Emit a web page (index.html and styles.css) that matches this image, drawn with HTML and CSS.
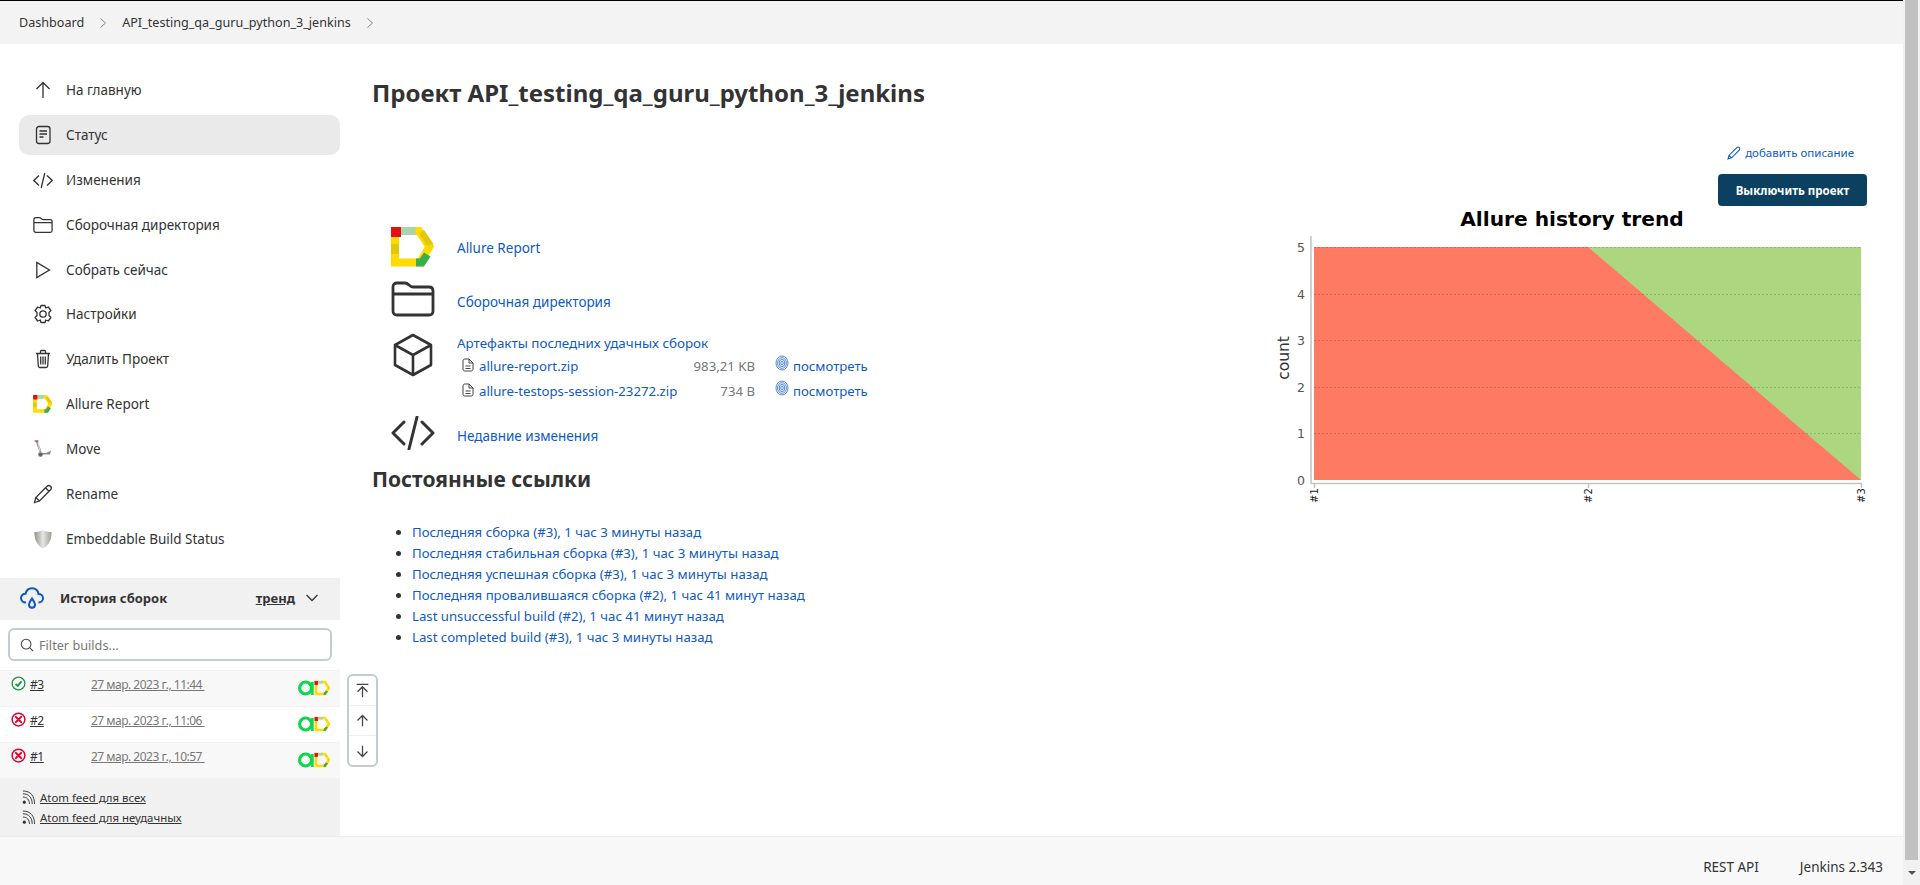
FILE: index.html
```html
<!DOCTYPE html>
<html>
<head>
    <meta charset="utf-8">
    <title>API_testing_qa_guru_python_3_jenkins</title>
    <link rel="stylesheet" href="styles.css">
</head>
<body>
    <svg class="sprite">
        <symbol id="allure" viewBox="0 0 44 40">
            <path d="M4 4H28L38.500 19.500L29 35.500H4Z" fill="none" stroke="#ffdb00" stroke-width="8"/>
            <rect x="0" y="17" width="8" height="10" fill="#e3c708"/>
            <rect x="0" y="0" width="10" height="10" fill="#e60d14"/>
            <rect x="10" y="0" width="14.500" height="8" fill="#a8d6a8"/>
            <path d="M28 7L33 3L42.500 17L36 19Z" fill="#e3c708"/>
            <path d="M25 31.500H29L33 25.500L39.500 29.500L33 39.500H25Z" fill="#3aae4a"/>
        </symbol>
        <symbol id="badge" viewBox="0 0 32 16">
            <circle cx="7.600" cy="8" r="6" fill="none" stroke="#10d64f" stroke-width="3.200"/>
            <path d="M14.400 2V15" stroke="#10d64f" stroke-width="2.600"/>
            <path d="M18 2H27L31 8L27 14H18Z" fill="none" stroke="#ffdb00" stroke-width="2.600"/>
            <rect x="16.500" y="1" width="3.400" height="4" fill="#e60d14"/>
            <rect x="20" y="1" width="5" height="2.600" fill="#a8d6a8"/>
            <path d="M25.500 15L26 12.500L28 10.500L30 11.500L27.500 15Z" fill="#3aae4a"/>
        </symbol>
        <symbol id="folder" viewBox="0 0 44 36">
            <path d="M6 2H14C16 2 17 3 18 4C19 5 20 6 22 6H38C40.500 6 42 7.500 42 10V30C42 32.500 40.500 34 38 34H6C3.500 34 2 32.500 2 30V6C2 3.500 3.500 2 6 2Z M2 13H42" fill="none" stroke="currentColor" stroke-width="2.800" stroke-linejoin="round"/>
        </symbol>
        <symbol id="code" viewBox="0 0 44 34">
            <path d="M13 6L2 17L13 28M31 6L42 17L31 28M26 1L18 33" fill="none" stroke="currentColor" stroke-width="3" stroke-linecap="round" stroke-linejoin="round"/>
        </symbol>
        <symbol id="print" viewBox="0 0 14 16">
            <g fill="none" stroke="#3f78c9" stroke-width=".9">
                <ellipse cx="7" cy="8" rx="6" ry="7"/>
                <ellipse cx="7" cy="8" rx="4.400" ry="5.300"/>
                <ellipse cx="7" cy="8" rx="2.800" ry="3.600"/>
                <ellipse cx="7" cy="8" rx="1.200" ry="1.900"/>
            </g>
        </symbol>
        <symbol id="file" viewBox="0 0 12 14">
            <path d="M3 1H7L11 5V11C11 12.300 10.300 13 9 13H3C1.700 13 1 12.300 1 11V3C1 1.700 1.700 1 3 1ZM7 1V5H11M3.500 8H8.500M3.500 10.500H8.500" fill="none" stroke="#444" stroke-width="1"/>
        </symbol>
        <symbol id="bad" viewBox="0 0 16 16">
            <circle cx="8" cy="8" r="6.800" fill="none" stroke="#e0002b" stroke-width="1.600"/>
            <path d="M5.200 5.200L10.800 10.800M10.800 5.200L5.200 10.800" stroke="#e0002b" stroke-width="2.200" stroke-linecap="round"/>
        </symbol>
        <symbol id="rss" viewBox="0 0 14 16">
            <circle cx="2.500" cy="13" r="1.700" fill="#333"/>
            <path d="M1 7.500C5.500 7.500 8 10.500 8 15M1 4C7.500 4 11 8.500 11 15M1 1C9.500 1 13.500 6.500 13.500 15" fill="none" stroke="#333" stroke-width="1"/>
        </symbol>
    </svg>

    <div class="window">
        <div class="page">
            <div class="breadcrumbs">
                <a href="#">Dashboard</a>
                <svg class="crumb-arrow" viewBox="0 0 8 12"><path d="M1.500 1.500L6.500 6L1.500 10.500"/></svg>
                <a href="#">API_testing_qa_guru_python_3_jenkins</a>
                <svg class="crumb-arrow" viewBox="0 0 8 12"><path d="M1.500 1.500L6.500 6L1.500 10.500"/></svg>
            </div>

            <div class="main">
                <div class="sidebar">
                    <div class="tasks">
                        <a class="task" href="#">
                            <svg class="task-icon" viewBox="0 0 20 20"><path d="M10 18V2.500M3.500 9L10 2.500L16.500 9"/></svg>
                            <span>На главную</span>
                        </a>
                        <a class="task task-active" href="#">
                            <svg class="task-icon" viewBox="0 0 20 20"><rect x="3.500" y="1.500" width="13.500" height="17" rx="2.500"/><path d="M6.500 6H14M6.500 9H14M6.500 12H10.500"/></svg>
                            <span>Статус</span>
                        </a>
                        <a class="task" href="#">
                            <svg class="task-icon" viewBox="0 0 20 20"><path d="M6 5.500L0.800 10.500L6 15.500M14 5.500L19.200 10.500L14 15.500M11.800 3L8.200 18"/></svg>
                            <span>Изменения</span>
                        </a>
                        <a class="task" href="#">
                            <svg class="task-icon" viewBox="0 0 20 20"><use href="#folder"/></svg>
                            <span>Сборочная директория</span>
                        </a>
                        <a class="task" href="#">
                            <svg class="task-icon" viewBox="0 0 20 20"><path d="M3.800 2.500V17.500L16.500 10Z"/></svg>
                            <span>Собрать сейчас</span>
                        </a>
                        <a class="task" href="#">
                            <svg class="task-icon" viewBox="0 0 20 20"><circle cx="10" cy="10" r="3.200"/><path d="M8 1.500H12L12.700 4L15.300 3L17.900 6.500L16 8.500V11.500L17.900 13.500L15.300 17L12.700 16L12 18.500H8L7.300 16L4.700 17L2.100 13.500L4 11.500V8.500L2.100 6.500L4.700 3L7.300 4Z" stroke-linejoin="round"/></svg>
                            <span>Настройки</span>
                        </a>
                        <a class="task" href="#">
                            <svg class="task-icon" viewBox="0 0 20 20"><path d="M3 4.500H17M7.500 4.500V2.500C7.500 1.800 8 1.500 8.500 1.500H11.500C12 1.500 12.500 1.800 12.500 2.500V4.500M4.500 4.500L5.300 17C5.400 18 6 18.500 6.800 18.500H13.200C14 18.500 14.600 18 14.700 17L15.500 4.500M7.700 7.500V15.500M10 7.500V15.500M12.300 7.500V15.500"/></svg>
                            <span>Удалить Проект</span>
                        </a>
                        <a class="task" href="#">
                            <svg class="task-logo" viewBox="0 0 20 18"><use href="#allure" width="20" height="18"/></svg>
                            <span>Allure Report</span>
                        </a>
                        <a class="task" href="#">
                            <svg class="task-logo" viewBox="0 0 20 20">
                                <path d="M3.500 1.500L7.500 13" stroke="#9a9a9a" stroke-width="2.200" fill="none"/>
                                <path d="M5 4L7 12" stroke="white" stroke-width=".7" fill="none"/>
                                <path d="M1.500 2H5.500" stroke="#c0474a" stroke-width="1.200"/>
                                <path d="M7 14H13L18 11.500L17 15.500H9Z" fill="#8c8c85"/>
                                <circle cx="7.500" cy="15.500" r="2.300" fill="#666"/>
                            </svg>
                            <span>Move</span>
                        </a>
                        <a class="task" href="#">
                            <svg class="task-icon" viewBox="0 0 20 20"><path d="M1.500 18.500L2.800 13.500L14 2.300C15 1.300 16.500 1.300 17.500 2.300C18.500 3.300 18.500 4.800 17.500 5.800L6.500 17ZM12.500 3.800L16 7.300M2.800 13.500L6.500 17"/></svg>
                            <span>Rename</span>
                        </a>
                        <a class="task" href="#">
                            <svg class="task-logo" viewBox="0 0 20 22">
                                <defs>
                                    <linearGradient id="shield" x1="0" y1="0" x2="1" y2="0">
                                        <stop offset="0" stop-color="#8f9389"/>
                                        <stop offset=".5" stop-color="#e6e6e2"/>
                                        <stop offset="1" stop-color="#9a9d94"/>
                                    </linearGradient>
                                </defs>
                                <path d="M10 1C13 2.500 16 3.200 19.500 3.200C19.500 11 17 17.500 10 21.500C3 17.500 .5 11 .5 3.200C4 3.200 7 2.500 10 1Z" fill="url(#shield)"/>
                            </svg>
                            <span>Embeddable Build Status</span>
                        </a>
                    </div>

                    <div class="history">
                        <div class="history-head">
                            <svg class="cloud" viewBox="0 0 24 22"><path d="M6 15.500C3 15.500 1 13.500 1 11C1 8.500 3 6.700 5.500 6.800C6.300 3.500 8.800 1.300 12 1.300C15.500 1.300 18 3.800 18.500 7C21 7 23 8.800 23 11.200C23 13.700 21 15.500 18.500 15.500M12 11.500C10.500 14 9 15.500 9 17.500C9 19.500 10.500 20.700 12 20.700C13.500 20.700 15 19.500 15 17.500C15 15.500 13.500 14 12 11.500Z"/></svg>
                            <span class="history-title">История сборок</span>
                            <a class="trend" href="#">тренд</a>
                            <svg class="chevron" viewBox="0 0 14 8"><path d="M1.500 1L7 6.500L12.500 1"/></svg>
                        </div>
                        <div class="filter-wrap">
                            <div class="filter">
                                <svg class="search" viewBox="0 0 16 16"><circle cx="7" cy="7" r="5.500"/><path d="M11 11L15 15"/></svg>
                                <span>Filter builds...</span>
                            </div>
                        </div>
                        <div class="build build-odd">
                            <svg class="status" viewBox="0 0 16 16">
                                <circle cx="8" cy="8" r="6.800" fill="none" stroke="#1a9447" stroke-width="1.400"/>
                                <path d="M4.800 8.300L7.200 10.600L11.200 5.800" fill="none" stroke="#1a9447" stroke-width="1.900"/>
                            </svg>
                            <a class="build-num" href="#">#3</a>
                            <a class="build-date" href="#">27 мар. 2023 г., 11:44&nbsp;</a>
                            <svg class="badge"><use href="#badge"/></svg>
                        </div>
                        <div class="build">
                            <svg class="status"><use href="#bad"/></svg>
                            <a class="build-num" href="#">#2</a>
                            <a class="build-date" href="#">27 мар. 2023 г., 11:06&nbsp;</a>
                            <svg class="badge"><use href="#badge"/></svg>
                        </div>
                        <div class="build build-odd">
                            <svg class="status"><use href="#bad"/></svg>
                            <a class="build-num" href="#">#1</a>
                            <a class="build-date" href="#">27 мар. 2023 г., 10:57&nbsp;</a>
                            <svg class="badge"><use href="#badge"/></svg>
                        </div>
                        <div class="feeds">
                            <div class="feed"><svg class="rss"><use href="#rss"/></svg><a href="#">Atom feed для всех</a></div>
                            <div class="feed"><svg class="rss"><use href="#rss"/></svg><a href="#">Atom feed для неудачных</a></div>
                        </div>
                    </div>
                </div>

                <div class="content">
                    <h1>Проект API_testing_qa_guru_python_3_jenkins</h1>

                    <div class="actions">
                        <a class="add-desc" href="#">
                            <svg class="pencil" viewBox="0 0 20 20"><path d="M1.500 18.500L2.800 13.500L14 2.300C15 1.300 16.500 1.300 17.500 2.300C18.500 3.300 18.500 4.800 17.500 5.800L6.500 17ZM2.800 13.500L6.500 17"/></svg>
                            добавить описание
                        </a>
                        <button class="disable-btn" type="button">Выключить проект</button>
                    </div>

                    <div class="columns">
                        <div class="left">
                            <div class="link-row row-allure">
                                <svg class="big-icon"><use href="#allure" width="44" height="40"/></svg>
                                <a href="#">Allure Report</a>
                            </div>
                            <div class="link-row row-folder">
                                <svg class="big-icon"><use href="#folder" width="44" height="36"/></svg>
                                <a href="#">Сборочная директория</a>
                            </div>
                            <div class="link-row row-artifacts">
                                <svg class="big-icon cube" viewBox="0 0 44 44"><path d="M22 2L40 12V32L22 42L4 32V12ZM4 12L22 22L40 12M22 22V42"/></svg>
                                <div class="artifacts">
                                    <a class="artifacts-title" href="#">Артефакты последних удачных сборок</a>
                                    <div class="artifact">
                                        <svg class="file"><use href="#file"/></svg>
                                        <a class="artifact-name" href="#">allure-report.zip</a>
                                        <span class="artifact-size">983,21 KB</span>
                                        <svg class="print"><use href="#print"/></svg>
                                        <a href="#">посмотреть</a>
                                    </div>
                                    <div class="artifact">
                                        <svg class="file"><use href="#file"/></svg>
                                        <a class="artifact-name" href="#">allure-testops-session-23272.zip</a>
                                        <span class="artifact-size">734 B</span>
                                        <svg class="print"><use href="#print"/></svg>
                                        <a href="#">посмотреть</a>
                                    </div>
                                </div>
                            </div>
                            <div class="link-row row-code">
                                <svg class="big-icon"><use href="#code" width="44" height="34"/></svg>
                                <a href="#">Недавние изменения</a>
                            </div>

                            <h2>Постоянные ссылки</h2>
                            <ul class="permalinks">
                                <li><a href="#">Последняя сборка (#3), 1 час 3 минуты назад</a></li>
                                <li><a href="#">Последняя стабильная сборка (#3), 1 час 3 минуты назад</a></li>
                                <li><a href="#">Последняя успешная сборка (#3), 1 час 3 минуты назад</a></li>
                                <li><a href="#">Последняя провалившаяся сборка (#2), 1 час 41 минут назад</a></li>
                                <li><a href="#">Last unsuccessful build (#2), 1 час 41 минут назад</a></li>
                                <li><a href="#">Last completed build (#3), 1 час 3 минуты назад</a></li>
                            </ul>
                        </div>

                        <svg class="chart" viewBox="0 0 620 300">
                            <text class="chart-title" x="325" y="20">Allure history trend</text>
                            <rect x="67" y="41" width="547" height="233" fill="#ff7a63"/>
                            <path d="M341 41H614V274Z" fill="#add681"/>
                            <g class="chart-grid">
                                <path d="M67 41.500H614M67 88.500H614M67 134.500H614M67 181.500H614M67 227.500H614"/>
                            </g>
                            <path class="chart-axis" d="M64 30V278M64 277.500H615M67.500 278V282M341.500 278V282M614.500 278V282"/>
                            <text class="chart-num" x="58" y="46">5</text>
                            <text class="chart-num" x="58" y="93">4</text>
                            <text class="chart-num" x="58" y="139">3</text>
                            <text class="chart-num" x="58" y="186">2</text>
                            <text class="chart-num" x="58" y="232">1</text>
                            <text class="chart-num" x="58" y="279">0</text>
                            <text class="chart-label" transform="translate(42 152) rotate(-90)">count</text>
                            <text class="chart-tick" transform="translate(71 297) rotate(-90)">#1</text>
                            <text class="chart-tick" transform="translate(345 297) rotate(-90)">#2</text>
                            <text class="chart-tick" transform="translate(618 297) rotate(-90)">#3</text>
                        </svg>
                    </div>

                    <div class="jump">
                        <div class="jump-btn">
                            <svg viewBox="0 0 18 18"><path d="M2 1.500H16M9 17V5M3 10.500L9 4.500L15 10.500"/></svg>
                        </div>
                        <div class="jump-btn">
                            <svg viewBox="0 0 18 18"><path d="M9 16V3M3 9L9 3L15 9"/></svg>
                        </div>
                        <div class="jump-btn">
                            <svg viewBox="0 0 18 18"><path d="M9 2V15M3 9L9 15L15 9"/></svg>
                        </div>
                    </div>
                </div>
            </div>

            <div class="footer">
                <a href="#">REST API</a>
                <a href="#">Jenkins 2.343</a>
            </div>
        </div>

        <div class="scrollbar">
            <div class="scroll-thumb"></div>
            <div class="scroll-arrow"></div>
        </div>
    </div>
</body>
</html>
```

FILE: styles.css
```css
* {
    box-sizing: border-box;
}

html, body {
    height: 100%;
    margin: 0;
    overflow: hidden;
}

body {
    font-family: "Noto Sans", "Open Sans", "Liberation Sans", sans-serif;
    font-size: 13.5px;
    color: #333;
    background-color: white;
}

a {
    color: inherit;
    text-decoration: none;
}

.sprite {
    display: none;
}

.window {
    display: flex;
    height: 885px;
}

.page {
    flex: 1;
    display: flex;
    flex-direction: column;
    min-width: 0;
    border-top: 1px solid black;
}

/* top bar */
.breadcrumbs {
    height: 43px;
    flex: none;
    display: flex;
    align-items: center;
    padding-left: 19px;
    background-color: #f3f3f3;
    font-size: 12.600px;
}

.crumb-arrow {
    width: 8px;
    height: 12px;
    margin: 0 15px;
    fill: none;
    stroke: #888;
    stroke-width: 1;
}

.main {
    flex: 1;
    display: flex;
    min-height: 0;
}

/* left side */
.sidebar {
    width: 340px;
    flex: none;
    display: flex;
    flex-direction: column;
}

.tasks {
    flex: 1;
    padding: 26px 0 0 19px;
    display: flex;
    flex-direction: column;
    gap: 4.900px;
}

.task {
    width: 321px;
    height: 40px;
    flex: none;
    display: flex;
    align-items: center;
    gap: 13px;
    padding-left: 14px;
    border-radius: 10px;
}

.task-active {
    background-color: #eaeaea;
}

.task-icon {
    width: 20px;
    height: 20px;
    flex: none;
    fill: none;
    stroke: #333;
    stroke-width: 1.300;
    color: #333;
}

.task-logo {
    width: 20px;
    height: 20px;
    flex: none;
}

.history {
    flex: none;
    height: 258px;
    display: flex;
    flex-direction: column;
}

.history-head {
    height: 42px;
    flex: none;
    display: flex;
    align-items: center;
    padding: 0 21px 2px 20px;
    background-color: #f1f1f1;
    font-size: 13px;
    font-weight: 700;
}

.cloud {
    width: 24px;
    height: 22px;
    fill: none;
    stroke: #0b55c4;
    stroke-width: 2;
    margin-right: 16px;
}

.history-title {
    flex: 1;
}

.trend {
    text-decoration: underline;
    margin-right: 10px;
}

.chevron {
    width: 14px;
    height: 8px;
    fill: none;
    stroke: #333;
    stroke-width: 1.300;
}

.filter-wrap {
    height: 50px;
    flex: none;
    padding: 8px 8px 0 8px;
}

.filter {
    height: 33px;
    display: flex;
    align-items: center;
    gap: 5px;
    padding-left: 10px;
    border: 2px solid #c3ccd1;
    border-radius: 6px;
    color: #777;
    font-size: 12.700px;
}

.search {
    width: 14px;
    height: 14px;
    fill: none;
    stroke: #444;
    stroke-width: 1.200;
}

.build {
    height: 36px;
    flex: none;
    display: flex;
    align-items: flex-start;
    padding: 5px 10px 0 11px;
    border-top: 1px solid #f1f1f1;
    color: #777;
}

.build-odd {
    background-color: #f8f8f8;
}

.status {
    width: 15px;
    height: 15px;
    flex: none;
    margin-right: 4px;
}

.build-num {
    width: 61px;
    color: #333;
    text-decoration: underline;
    font-size: 12px;
    letter-spacing: -0.4px;
}

.build-date {
    text-decoration: underline;
    font-size: 12px;
    letter-spacing: -0.5px;
    flex: 1;
}

.badge {
    width: 32px;
    height: 16px;
    flex: none;
    margin-top: 4px;
}

.feeds {
    flex: 1;
    padding: 9px 0 0 22px;
    background-color: #f1f1f1;
    font-size: 11.400px;
}

.feed {
    height: 20px;
    display: flex;
    align-items: center;
    gap: 5px;
}

.feed a {
    text-decoration: underline;
}

.rss {
    width: 13px;
    height: 15px;
    flex: none;
}

/* right side */
.content {
    flex: 1;
    min-width: 0;
    position: relative;
    padding: 0 36px 0 32px;
}

h1 {
    margin: 0;
    padding-top: 32px;
    font-size: 24px;
    line-height: 34px;
    font-weight: 700;
}

.actions {
    display: flex;
    flex-direction: column;
    align-items: flex-end;
    margin-top: 34px;
}

.add-desc {
    display: flex;
    align-items: center;
    gap: 4px;
    font-size: 11.500px;
    line-height: 18px;
    color: #0f5ac6;
    margin-right: 13px;
}

.pencil {
    width: 14px;
    height: 14px;
    fill: none;
    stroke: #0f5ac6;
    stroke-width: 1.500;
}

.disable-btn {
    width: 149px;
    height: 32px;
    margin-top: 12px;
    border: none;
    border-radius: 4px;
    background-color: #0b4060;
    color: white;
    font-family: inherit;
    font-size: 11.500px;
    font-weight: 700;
}

.columns {
    display: flex;
    justify-content: space-between;
    align-items: flex-start;
}

.left {
    color: #0f5ac6;
    padding: 21px 0 0 19px;
}

.link-row {
    display: flex;
    align-items: center;
    gap: 22px;
}

.big-icon {
    width: 44px;
    height: 40px;
    flex: none;
    color: #333;
}

.row-allure a {
    margin-top: 2px;
}

.row-folder {
    margin-top: 14px;
}

.row-folder .big-icon {
    height: 36px;
}

.row-folder a, .row-code a {
    margin-top: 6px;
}

.row-artifacts {
    margin-top: 16px;
    align-items: flex-start;
}

.cube {
    height: 44px;
    fill: none;
    stroke: #333;
    stroke-width: 2.600;
    stroke-linejoin: round;
}

.artifacts {
    font-size: 13.200px;
}

.artifacts-title {
    display: block;
    font-size: 13.400px;
    line-height: 20px;
}

.artifact {
    display: flex;
    align-items: center;
    height: 25px;
    padding-left: 5px;
    white-space: nowrap;
}

.file {
    width: 12px;
    height: 14px;
    flex: none;
    margin-right: 5px;
    margin-top: -2px;
}

.artifact-name {
    width: 200px;
}

.artifact-size {
    width: 76px;
    text-align: right;
    color: #777;
}

.print {
    width: 14px;
    height: 16px;
    margin: -6px 4px 0 20px;
    flex: none;
}

.row-code {
    margin-top: 13px;
}

.row-code .big-icon {
    height: 34px;
}

h2 {
    margin: 15px 0 0 -19px;
    font-size: 21px;
    line-height: 28px;
    font-weight: 700;
    color: #333;
}

.permalinks {
    margin: 0;
    padding: 29px 0 0 21px;
    font-size: 13.200px;
    line-height: 21px;
    color: #333;
}

.permalinks a {
    color: #0f5ac6;
}

.chart {
    width: 620px;
    height: 300px;
    flex: none;
}

.chart text {
    font-family: "DejaVu Sans", sans-serif;
}

.chart .chart-title {
    font-size: 20.200px;
    font-weight: 700;
    text-anchor: middle;
    fill: black;
}

.chart .chart-num {
    font-size: 12.500px;
    text-anchor: end;
    fill: #555;
}

.chart .chart-label {
    font-size: 15.500px;
    text-anchor: middle;
    fill: #333;
}

.chart .chart-tick {
    font-size: 10px;
    fill: #222;
}

.chart-grid {
    fill: none;
    stroke: rgba(0, 0, 0, 0.16);
    stroke-dasharray: 2 2;
}

.chart-axis {
    fill: none;
    stroke: #c4c4c4;
    stroke-width: 1.500;
}

/* floating jump buttons */
.jump {
    position: absolute;
    left: 7px;
    top: 630px;
    width: 31px;
    height: 93px;
    border: 2px solid #c3ccd1;
    border-radius: 6px;
    background-color: white;
}

.jump-btn {
    height: 30px;
    display: flex;
    align-items: center;
    justify-content: center;
    border-bottom: 1px solid #eee;
}

.jump-btn:last-child {
    border-bottom: none;
}

.jump-btn svg {
    width: 15px;
    height: 15px;
    fill: none;
    stroke: #444;
    stroke-width: 1.500;
}

.footer {
    height: 49px;
    flex: none;
    display: flex;
    justify-content: flex-end;
    align-items: center;
    gap: 41px;
    padding: 11px 20px 0 0;
    background-color: #f8f8f8;
    border-top: 1px solid #eee;
}

/* browser scrollbar */
.scrollbar {
    width: 17px;
    flex: none;
    display: flex;
    flex-direction: column;
    padding: 0 2px;
    background-color: #f1f1f1;
}

.scroll-thumb {
    height: 860px;
    flex: none;
    background-color: #c1c1c1;
}

.scroll-arrow {
    flex: 1;
    display: flex;
    align-items: center;
    justify-content: center;
}

.scroll-arrow::after {
    content: "";
    border-left: 4px solid transparent;
    border-right: 4px solid transparent;
    border-top: 4px solid #505050;
}
```
